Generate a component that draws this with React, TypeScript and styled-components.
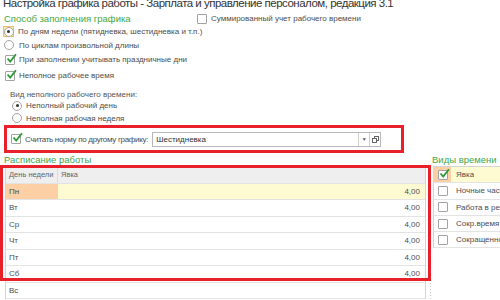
import React from 'react';
import styled, { createGlobalStyle } from 'styled-components';

const GlobalStyle = createGlobalStyle`
  html, body {
    margin: 0;
    padding: 0;
    background: #ffffff;
  }
  body {
    font-family: 'Liberation Sans', Arial, sans-serif;
    color: #4a4a4a;
    overflow: hidden;
  }
`;

const Page = styled.div`
  width: 500px;
  height: 300px;
  overflow: hidden;
  position: relative;
  background: #fff;
`;

const Title = styled.div`
  font-size: 11.5px;
  letter-spacing: -0.5px;
  line-height: 14px;
  height: 16px;
  margin-top: -4px;
  padding-left: 3px;
  color: #333;
  white-space: nowrap;
`;

const Form = styled.div`
  padding-left: 4px;
`;

const TopRow = styled.div`
  display: flex;
  align-items: center;
  height: 13px;
`;

const SectionTitle = styled.div<{ width?: number }>`
  color: #46a546;
  font-size: 9.5px;
  line-height: 13px;
  height: 13px;
  white-space: nowrap;
  width: ${p => (p.width ? `${p.width}px` : 'auto')};
`;

const Row = styled.div<{ h: number; indent?: number; mt?: number }>`
  display: flex;
  align-items: center;
  height: ${p => p.h}px;
  margin-top: ${p => p.mt || 0}px;
  padding-left: ${p => p.indent || 0}px;
  white-space: nowrap;
`;

const Label = styled.span<{ gap?: number; tight?: boolean }>`
  font-size: 8px;
  color: #4d4d4d;
  margin-left: ${p => (p.gap === undefined ? 5 : p.gap)}px;
  letter-spacing: ${p => (p.tight ? '-0.3px' : 'normal')};
`;

const Caption = styled.span`
  font-size: 8px;
  color: #555;
`;

const Box = styled.span`
  position: relative;
  display: inline-block;
  width: 8px;
  height: 8px;
  border: 1px solid #a3a3a3;
  border-radius: 1px;
  background: #fff;
  flex: none;
`;

const CheckMark = styled.svg`
  position: absolute;
  left: 0px;
  top: -3px;
  width: 11px;
  height: 11px;
  overflow: visible;
`;

const Circle = styled.span`
  display: inline-flex;
  align-items: center;
  justify-content: center;
  width: 8px;
  height: 8px;
  border: 1px solid #a3a3a3;
  border-radius: 50%;
  background: #fff;
  flex: none;
`;

const Dot = styled.span`
  width: 3px;
  height: 3px;
  border-radius: 50%;
  background: #333;
`;

const Focus = styled.span`
  display: inline-flex;
  align-items: center;
  justify-content: center;
  width: 11px;
  height: 11px;
  margin-left: -1px;
  margin-right: -1px;
  background: #fde9b6;
  box-shadow: inset 0 0 0 1px #f2bf6a;
`;

const Highlight = styled.div`
  box-sizing: border-box;
  width: 400px;
  height: 28px;
  border: 3px solid #e8202a;
  display: flex;
  align-items: center;
  padding-left: 4px;
  white-space: nowrap;
`;

const Field = styled.div`
  display: flex;
  height: 15px;
  margin-left: 4px;
  box-sizing: border-box;
  border: 1px solid #b8b8b8;
  background: #fff;
`;

const FieldText = styled.div`
  width: 205px;
  font-size: 8px;
  color: #333;
  line-height: 13px;
  padding-left: 3px;
  box-sizing: border-box;
`;

const FieldButton = styled.div`
  width: 10px;
  border-left: 1px solid #cfcfcf;
  display: flex;
  align-items: center;
  justify-content: center;
  font-size: 5px;
  color: #555;
`;

const Bottom = styled.div`
  display: flex;
`;

const LeftPane = styled.div`
  position: relative;
  width: 428px;
  flex: none;
`;

const PaneTitle = styled(SectionTitle)`
  padding-left: 4px;
`;

const Grid = styled.div`
  margin-left: 5px;
  width: 421px;
  box-sizing: border-box;
  border-left: 1px solid #d4d4d4;
  border-right: 1px solid #d4d4d4;
  border-top: 1px solid #d4d4d4;
`;

const GridRow = styled.div<{ head?: boolean; active?: boolean }>`
  display: grid;
  grid-template-columns: 52px 1fr;
  height: 16.5px;
  box-sizing: border-box;
  border-bottom: 1px solid #e3e3e3;
  background: ${p => (p.head ? '#efefef' : p.active ? '#fefbd2' : '#fff')};
  font-size: ${p => (p.head ? '7.5px' : '8px')};
  color: ${p => (p.head ? '#666' : '#4d4d4d')};
  white-space: nowrap;
`;

const Cell = styled.div<{ right?: boolean; active?: boolean; divider?: boolean }>`
  display: flex;
  align-items: center;
  justify-content: ${p => (p.right ? 'flex-end' : 'flex-start')};
  padding: 0 5px 0 3px;
  overflow: hidden;
  background: ${p => (p.active ? '#fcd0a4' : 'transparent')};
  border-right: ${p => (p.divider ? '1px solid #dcdcdc' : 'none')};
`;

const Annotation = styled.div`
  position: absolute;
  left: 0px;
  top: 12px;
  width: 431px;
  height: 116px;
  box-sizing: border-box;
  border: 3px solid #e8202a;
  pointer-events: none;
`;

const Splitter = styled.div`
  width: 4px;
  flex: none;
  display: flex;
  justify-content: center;
  padding-top: 13px;
`;

const Dots = styled.div`
  width: 1px;
  height: 140px;
  background: repeating-linear-gradient(to bottom, #c8c8c8 0 1px, transparent 1px 3px);
`;

const RightPane = styled.div`
  flex: 1;
  min-width: 0;
  overflow: hidden;
`;

const KindsTable = styled.div`
  margin-left: 1px;
  border-left: 1px solid #d4d4d4;
  border-top: 1px solid #d4d4d4;
`;

const KindRow = styled.div<{ active?: boolean }>`
  display: flex;
  height: 16.3px;
  box-sizing: border-box;
  border-bottom: 1px solid #e3e3e3;
  background: ${p => (p.active ? '#fefbd2' : '#fff')};
  white-space: nowrap;
`;

const KindCheck = styled.div<{ active?: boolean }>`
  width: 17px;
  flex: none;
  display: flex;
  align-items: center;
  justify-content: center;
  background: ${p => (p.active ? '#fcd0a4' : 'transparent')};
`;

const KindName = styled.div`
  display: flex;
  align-items: center;
  padding-left: 5px;
  font-size: 8px;
  color: #4d4d4d;
  overflow: hidden;
`;

const Check: React.FC<{ checked?: boolean }> = ({ checked }) => (
  <Box>
    {checked && (
      <CheckMark viewBox="0 0 11 11">
        <path d="M1.5 5.5 L4.2 8.6 L10 1.2" fill="none" stroke="#2e9a35" strokeWidth="1.8" />
      </CheckMark>
    )}
  </Box>
);

const Radio: React.FC<{ on?: boolean }> = ({ on }) => <Circle>{on && <Dot />}</Circle>;

const CopyIcon = () => (
  <svg width="7" height="7" viewBox="0 0 7 7">
    <rect x="2.5" y="0.5" width="4" height="4" fill="#fff" stroke="#666" strokeWidth="1" />
    <rect x="0.5" y="2.5" width="4" height="4" fill="#fff" stroke="#666" strokeWidth="1" />
  </svg>
);

const days = ['Пн', 'Вт', 'Ср', 'Чт', 'Пт', 'Сб', 'Вс'];
const kinds = ['Явка', 'Ночные часы', 'Работа в режиме', 'Сокр.время обучения', 'Сокращенное время'];

export default function App() {
  return (
    <Page>
      <GlobalStyle />
      <Title>Настройка графика работы - Зарплата и управление персоналом, редакция 3.1</Title>
      <Form>
        <TopRow>
          <SectionTitle width={193}>Способ заполнения графика</SectionTitle>
          <Check />
          <Label gap={4}>Суммированный учет рабочего времени</Label>
        </TopRow>
        <Row h={13}>
          <Focus>
            <Radio on />
          </Focus>
          <Label>По дням недели (пятидневка, шестидневка и т.п.)</Label>
        </Row>
        <Row h={14}>
          <Radio />
          <Label>По циклам произвольной длины</Label>
        </Row>
        <Row h={15} indent={1}>
          <Check checked />
          <Label gap={4}>При заполнении учитывать праздничные дни</Label>
        </Row>
        <Row h={15} mt={1} indent={1}>
          <Check checked />
          <Label gap={4}>Неполное рабочее время</Label>
        </Row>
        <Row h={12} mt={5} indent={6}>
          <Caption>Вид неполного рабочего времени:</Caption>
        </Row>
        <Row h={11} indent={8}>
          <Radio on />
          <Label gap={4}>Неполный рабочий день</Label>
        </Row>
        <Row h={14} indent={8}>
          <Radio />
          <Label gap={4}>Неполная рабочая неделя</Label>
        </Row>
        <Highlight>
          <Check checked />
          <Label gap={4} tight>Считать норму по другому графику:</Label>
          <Field>
            <FieldText>Шестидневка</FieldText>
            <FieldButton>▼</FieldButton>
            <FieldButton>
              <CopyIcon />
            </FieldButton>
          </Field>
        </Highlight>
      </Form>
      <Bottom>
        <LeftPane>
          <PaneTitle>Расписание работы</PaneTitle>
          <Grid>
            <GridRow head>
              <Cell divider>День недели</Cell>
              <Cell>Явка</Cell>
            </GridRow>
            {days.map((d, i) => (
              <GridRow key={d} active={i === 0}>
                <Cell active={i === 0}>{d}</Cell>
                <Cell right>{i < 6 ? '4,00' : ''}</Cell>
              </GridRow>
            ))}
          </Grid>
          <Annotation />
        </LeftPane>
        <Splitter>
          <Dots />
        </Splitter>
        <RightPane>
          <SectionTitle>Виды времени</SectionTitle>
          <KindsTable>
            {kinds.map((k, i) => (
              <KindRow key={k} active={i === 0}>
                <KindCheck active={i === 0}>
                  <Check checked={i === 0} />
                </KindCheck>
                <KindName>{k}</KindName>
              </KindRow>
            ))}
          </KindsTable>
        </RightPane>
      </Bottom>
    </Page>
  );
}
